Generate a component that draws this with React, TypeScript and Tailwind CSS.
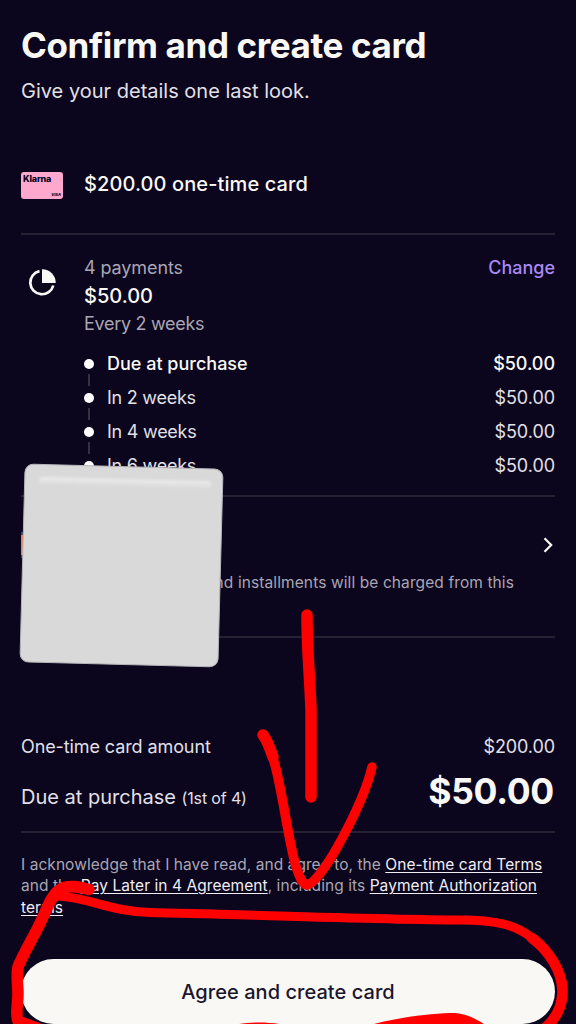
const installments = [
  { label: "Due at purchase", amount: "$50.00", current: true },
  { label: "In 2 weeks", amount: "$50.00", current: false },
  { label: "In 4 weeks", amount: "$50.00", current: false },
  { label: "In 6 weeks", amount: "$50.00", current: false },
];

function Divider() {
  return <div className="h-[2px] shrink-0 bg-[#272134]" />;
}

function KlarnaCard() {
  return (
    <div className="relative h-[27px] w-[42px] shrink-0 rounded-[3px] bg-[#ffa8cd] text-[#0b051d]">
      <span className="absolute left-[2px] top-[2px] text-[9px] font-extrabold leading-[9px] tracking-[-0.2px]">
        Klarna
      </span>
      <span className="absolute bottom-[1.5px] right-[2px] text-[4px] font-extrabold italic leading-[4px]">
        VISA
      </span>
    </div>
  );
}

function PaymentPlan() {
  return (
    <section className="flex h-[260px] shrink-0">
      {/* Pie icon */}
      <div className="w-[63px] shrink-0 pt-[33px]">
        <svg className="ml-[7px]" width="28" height="30" viewBox="0 0 28 30" fill="none">
          <path d="M11.5 3.1A11.7 11.7 0 1 0 25.3 17.5" stroke="#f9f8f5" strokeWidth="2.7" />
          <path d="M14 1.2A13.5 13.5 0 0 1 27.7 15H14Z" fill="#f9f8f5" />
        </svg>
      </div>

      <div className="flex-1 pt-[19px]">
        <div className="flex justify-between text-[18px] leading-7">
          <span className="tracking-[-0.1px] text-[#a9a6b4]">4 payments</span>
          <button className="font-medium text-[#aa89f2]">Change</button>
        </div>
        <div className="text-[20px] font-medium leading-7 text-[#f9f8f5]">$50.00</div>
        <div className="text-[18px] leading-7 tracking-[-0.3px] text-[#a9a6b4]">Every 2 weeks</div>

        {/* Installment timeline */}
        <ul className="pt-2">
          {installments.map((item, i) => (
            <li
              key={item.label}
              className={`relative flex h-[34px] items-center justify-between text-[18px] ${
                item.current ? "font-medium text-[#f9f8f5]" : "tracking-[-0.25px] text-[#e2e0e8]"
              }`}
            >
              <span className="flex items-center">
                <span className="mr-[13px] mt-px h-[10px] w-[10px] rounded-full bg-white" />
                {item.label}
              </span>
              <span className="tracking-[-0.05px]">{item.amount}</span>
              {i < installments.length - 1 && (
                <span className="absolute left-1 top-7 h-3 w-[2px] bg-[#353042]" />
              )}
            </li>
          ))}
        </ul>
      </div>
    </section>
  );
}

function PaymentMethod() {
  return (
    <section className="h-[139px] shrink-0 pt-[35px]">
      <div className="flex items-center justify-between">
        <span className="h-[26px] w-10 border-y-[3px] border-y-[#34455f] bg-[#f47a45]" />
        <svg className="mr-[1px]" width="11" height="18" viewBox="0 0 11 18" fill="none">
          <path d="M1.5 2.3 8.2 9 1.5 15.7" stroke="#f9f8f5" strokeWidth="2.2" />
        </svg>
      </div>
      <p className="whitespace-nowrap pr-[41px] pt-[13px] text-right text-[15.5px] leading-6 tracking-[0.1px] text-[#a9a6b4]">
        and installments will be charged from this
      </p>
    </section>
  );
}

function Summary() {
  return (
    <section className="h-[193px] shrink-0 pt-[94px] text-[#e2e0e8]">
      <div className="flex h-7 items-center justify-between text-[18px] tracking-[-0.1px]">
        <span>One-time card amount</span>
        <span>$200.00</span>
      </div>
      <div className="flex items-baseline justify-between pt-[8px]">
        <span className="text-[20px]">
          Due at purchase <span className="text-[16px] tracking-[-0.15px]">(1st of 4)</span>
        </span>
        <span className="pr-[1px] text-[35.5px] font-bold leading-[48px] tracking-[-0.3px] text-[#f9f8f5]">
          $50.00
        </span>
      </div>
    </section>
  );
}

function Legal() {
  const link = "text-[#f0eef4] underline underline-offset-2";

  return (
    <p className="h-[126px] shrink-0 whitespace-nowrap pt-[21px] text-[15.5px] leading-[21.3px] tracking-[0.06px] text-[#a9a6b4]">
      I acknowledge that I have read, and agree to, the <a className={link}>One-time card Terms</a>
      <br />
      and the <a className={link}>Pay Later in 4 Agreement</a>, including its{" "}
      <a className={link}>Payment Authorization</a>
      <br />
      <a className={link}>terms</a>
    </p>
  );
}

/* Blank sticky note taped over the payment method */
function StickyNote() {
  return (
    <div className="absolute left-[21.5px] top-[465.5px] h-[199px] w-[199px] rotate-[1.5deg] rounded-[9px] border border-[#b5b4ba] bg-[#d9d9d9]">
      <div className="ml-[14px] mt-[12px] h-[8px] w-[172px] rounded-sm bg-gradient-to-b from-[#ececec] to-[#d9d9d9] blur-[1px]" />
    </div>
  );
}

/* Hand drawn arrow and circle pointing at the button */
function Scribble() {
  return (
    <svg
      className="pointer-events-none absolute inset-0"
      width="576"
      height="1024"
      viewBox="0 0 576 1024"
      fill="none"
      stroke="#ff0000"
      strokeWidth="10"
      strokeLinecap="round"
      strokeLinejoin="round"
    >
      {/* Arrow */}
      <path d="M307 615C307 650 310 680 311 710V797" strokeWidth="11.5" />
      <path d="M263 735C279 757 285 826 295 863C299 877 303 885 307 885C322 883 364 802 372 767" strokeWidth="9.5" />
      <path d="M263 735C267 740 270 748 273 757" strokeWidth="11.5" />

      {/* Circle round the button */}
      <path
        d="M89 889.5C80 887 68 884 59 890C51 896 47 909 42 919C35 935 24 952 18 967C16 975 18 985 18 994C18 1004 15 1014 18 1021C26 1024 34 1027 42 1030"
        strokeWidth="11.5"
      />
      <path
        d="M58 896C92 898 108 911 150 912.5C230 914 380 919.5 460 920C497 920 516 925 532 938C548 950 563 970 563 991C563 1008 556 1019 543 1030"
        strokeWidth="9"
      />
      <path d="M532 938C548 950 562 970 562.5 991C562 1008 556 1019 543 1030" strokeWidth="10.5" />
      <path d="M374 1024C400 1017 435 1013 455 1013C467 1014 476 1019 484 1024Z" fill="#ff0000" stroke="none" />
      <path d="M239 1024C250 1022 268 1022 279 1024Z" fill="#ff0000" stroke="none" />
    </svg>
  );
}

export default function App() {
  return (
    <div className="relative flex h-[1024px] w-[576px] flex-col overflow-hidden bg-[#0b051d] px-[21px] font-['Inter',sans-serif]">
      <header className="h-[135px] shrink-0 whitespace-nowrap pt-[21px]">
        <h1 className="text-[35px] font-bold leading-[48px] tracking-[-0.38px] text-[#f9f8f5]">
          Confirm and create card
        </h1>
        <p className="pt-[8px] text-[20px] leading-7 text-[#e2e0e8]">Give your details one last look.</p>
      </header>

      <section className="flex h-[98px] shrink-0 items-center text-[#f9f8f5]">
        <div className="pt-[2px]">
          <KlarnaCard />
        </div>
        <span className="ml-[21px] text-[20px] font-medium tracking-[0.1px]">$200.00 one-time card</span>
      </section>
      <Divider />
      <PaymentPlan />
      <Divider />
      <PaymentMethod />
      <Divider />
      <Summary />
      <Divider />
      <Legal />
      <button className="h-[65px] shrink-0 rounded-full bg-[#f9f8f5] text-[20px] font-medium tracking-[0.05px] text-[#1c162d]">
        Agree and create card
      </button>

      <StickyNote />
      <Scribble />
    </div>
  );
}
